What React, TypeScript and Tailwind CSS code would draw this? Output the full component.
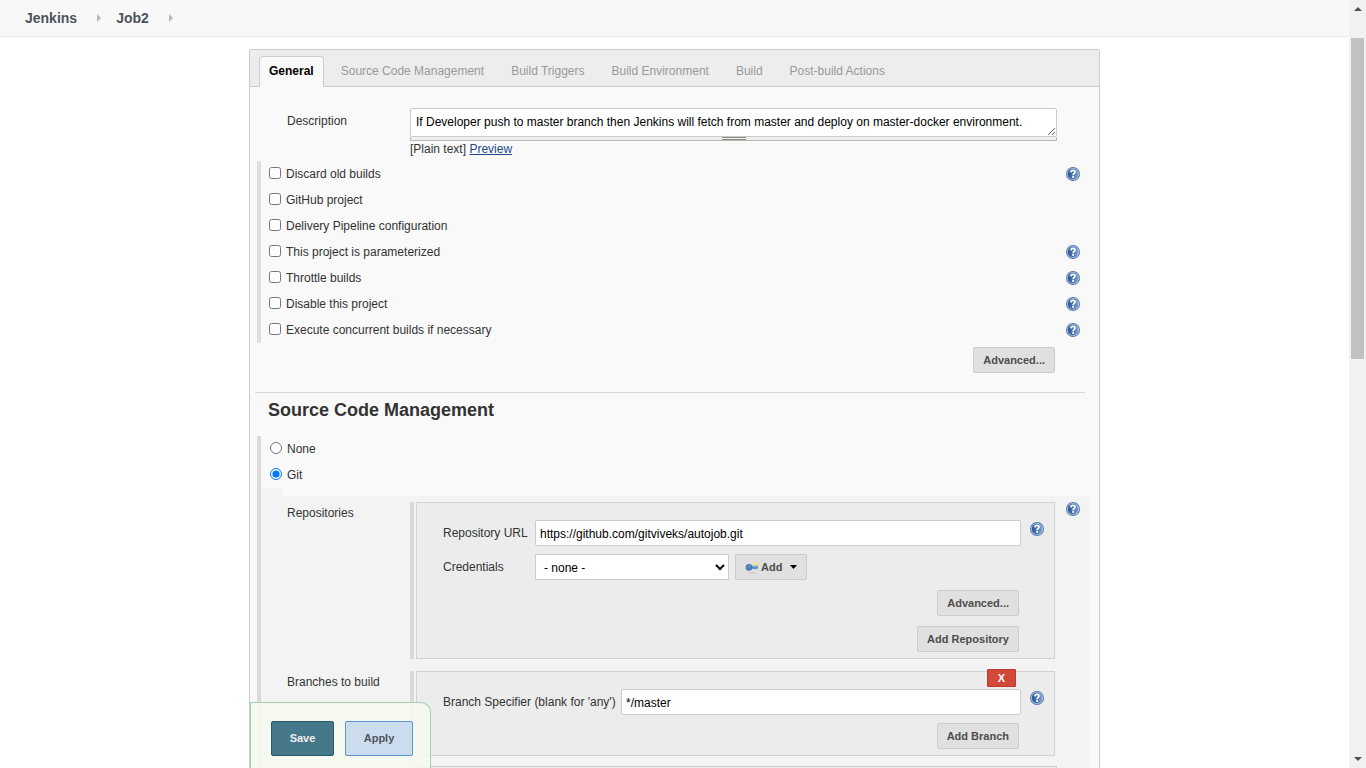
import type { ReactNode } from "react";

function HelpIcon() {
  return (
    <svg viewBox="0 0 14 14" className="block h-3.5 w-3.5" aria-hidden="true">
      <defs>
        <linearGradient id="help-fill" x1="0" y1="0" x2="1" y2="0">
          <stop offset="0" stopColor="#2c558f" />
          <stop offset="0.5" stopColor="#4a76b0" />
          <stop offset="1" stopColor="#7fa3cf" />
        </linearGradient>
      </defs>
      <circle cx="7" cy="7" r="7" fill="#5279ad" />
      <circle cx="7" cy="7" r="6.1" fill="#c3d3e6" />
      <circle cx="7" cy="7" r="5.4" fill="url(#help-fill)" />
      <path d="M4.9 5.4C5 3.9 5.9 3.4 7 3.4C8.3 3.4 9 4.2 9 5.1C9 6.4 7.1 6.5 7.1 8.2" fill="none" stroke="#fff" strokeWidth="1.7" />
      <rect x="6.2" y="9" width="1.8" height="1.8" fill="#fff" />
    </svg>
  );
}

function Help({ topic }: { topic: string }) {
  return (
    <button type="button" aria-label={"Help for " + topic} className="block h-3.5 w-3.5 shrink-0">
      <HelpIcon />
    </button>
  );
}

function KeyIcon() {
  return (
    <svg viewBox="0 0 16 14" className="h-3.5 w-4" aria-hidden="true">
      <ellipse cx="7.5" cy="12.8" rx="5" ry="0.6" fill="#cbcbcb" />
      <path d="M9 5.5L8.8 3L10.4 3.2L11.4 1.6L12.4 3.2L13.8 3L13 5.5L11.2 6.2Z" fill="#f1e873" />
      <path d="M6 5.8H13V8.8H11.7V9.3H9.7V8.9H6Z" fill="#5b8fc7" />
      <path d="M6.5 5.8H13V6.7H6.5Z" fill="#8fb4dc" />
      <circle cx="4" cy="7.4" r="3.3" fill="#4c7ab1" />
      <circle cx="3.9" cy="6.8" r="2" fill="#5c88bd" />
    </svg>
  );
}

function Btn({ children }: { children: ReactNode }) {
  return (
    <button
      type="button"
      className="flex h-[26px] items-center rounded-xs border border-[#ccc] bg-[#e0e0e0] px-[9px] text-[11px] font-bold text-[#4d4d4d]"
    >
      {children}
    </button>
  );
}

const tabs = ["General", "Source Code Management", "Build Triggers", "Build Environment", "Build", "Post-build Actions"];

const options = [
  { label: "Discard old builds", help: true },
  { label: "GitHub project", help: false },
  { label: "Delivery Pipeline configuration", help: false },
  { label: "This project is parameterized", help: true },
  { label: "Throttle builds", help: true },
  { label: "Disable this project", help: true },
  { label: "Execute concurrent builds if necessary", help: true },
];

const field = "h-[26px] rounded-xs border border-[#ccc] bg-white text-xs text-black";

function Crumb({ name }: { name: string }) {
  return (
    <li className="flex items-center">
      <a href="#" className="text-[#4d545d]">{name}</a>
      <svg viewBox="0 0 4 8" className="ml-5 h-2 w-1" aria-hidden="true">
        <path d="M0 0L4 4L0 8Z" fill="#b9b9b9" />
      </svg>
    </li>
  );
}

function Header() {
  return (
    <nav aria-label="Breadcrumb" className="border-b border-[#e3ebf0] bg-[#f8f8f8]">
      <ol className="flex h-9 items-center gap-[15px] pl-[25px] text-sm font-bold">
        <Crumb name="Jenkins" />
        <Crumb name="Job2" />
      </ol>
    </nav>
  );
}

function Tabs() {
  return (
    <div className="flex items-end gap-[7px] rounded-t-xs bg-[#ededed] pt-1.5 pl-[9px] shadow-[inset_0_-1px_0_#ccc]" role="tablist">
      {tabs.map((t, i) => (
        <button
          key={t}
          type="button"
          role="tab"
          aria-selected={i === 0}
          className={
            i === 0
              ? "h-[31px] rounded-t border border-b-0 border-[#ccc] bg-[#f9f9f9] px-[9px] pb-0.5 text-xs font-bold text-black"
              : "h-[31px] border border-b-0 border-transparent px-[9px] pb-0.5 text-xs text-[#999]"
          }
        >
          {t}
        </button>
      ))}
    </div>
  );
}

function General() {
  return (
    <section>
      <div className="flex pt-[21px] pr-[42px] pl-[37px]">
        <label htmlFor="description" className="w-[123px] pt-1 leading-[18px]">Description</label>
        <div className="min-w-0 flex-1">
          <textarea
            id="description"
            rows={1}
            className="block h-[29px] w-full overflow-hidden rounded-xs border border-[#ccc] bg-white px-[5px] py-1 text-xs leading-[18px] text-black"
            defaultValue="If Developer push to master branch then Jenkins will fetch from master and deploy on master-docker environment."
          />
          <div className="flex h-1 justify-center border-x border-b border-[#b8b8b0] bg-[#eee]">
            <span className="h-[3px] w-6 border-y border-[#8a9088]" />
          </div>
          <p className="leading-4">
            [Plain text] <a href="#" className="text-[#204a87] underline">Preview</a>
          </p>
        </div>
      </div>
      <div className="mt-1 ml-[7px] border-l-4 border-[#dedede] pr-[19px] pl-2">
        {options.map((o) => (
          <div key={o.label} className="flex h-[26px] items-center justify-between">
            <label className="flex items-center gap-[5px]">
              <input type="checkbox" className="mb-[3px] h-3 w-3" />
              {o.label}
            </label>
            {o.help && <Help topic={o.label} />}
          </div>
        ))}
      </div>
      <div className="flex justify-end pt-1 pr-11">
        <Btn>Advanced...</Btn>
      </div>
    </section>
  );
}

function Group({ label, children, help }: { label: string; children: ReactNode; help?: boolean }) {
  return (
    <div className="flex">
      <h3 className="w-[123px] shrink-0 pt-px leading-5">{label}</h3>
      <div className="flex min-w-0 flex-1 gap-0.5">
        <div className="w-1 shrink-0 bg-[#dadada]" />
        <div className="min-w-0 flex-1 border border-[#d2d2d2] bg-[#ececec] pl-[26px]">{children}</div>
      </div>
      <div className="w-[34px] shrink-0 pl-[11px]">{help && <Help topic={label} />}</div>
    </div>
  );
}

function SourceCode() {
  return (
    <section className="pb-16">
      <h2 className="mt-[19px] mr-3.5 ml-[5px] border-t border-[#d9d9d9] pt-1 pl-[13px] text-lg leading-[26px] font-bold">
        Source Code Management
      </h2>
      <div className="mt-[13px] mr-2.5 ml-[7px] border-l-4 border-[#dadada]">
        <div className="pl-[9px]">
          {["None", "Git"].map((name) => (
            <label key={name} className="flex h-[26px] items-center gap-[5px]">
              <input type="radio" name="scm" defaultChecked={name === "Git"} className="mb-[3px] h-3 w-3" />
              {name}
            </label>
          ))}
        </div>
        <div className="h-2 w-[21px] bg-[#f3f3f3]" />
        <div className="flex flex-col gap-3 bg-[#f3f3f3] pt-1.5 pl-[26px]">
          <Group label="Repositories" help>
            <div className="flex items-center pt-[17px] pr-2.5">
              <label htmlFor="url" className="w-[92px]">Repository URL</label>
              <input id="url" type="text" defaultValue="https://github.com/gitviveks/autojob.git" className={field + " min-w-0 flex-1 px-1 pt-0.5"} />
              <div className="ml-[9px] pb-2"><Help topic="Repository URL" /></div>
            </div>
            <div className="mt-2 flex items-center">
              <label htmlFor="credentials" className="w-[92px]">Credentials</label>
              <select id="credentials" className="mr-1.5 h-[26px] w-[194px] border border-[#ccc] bg-white px-1 pt-0.5 text-xs text-black">
                <option>- none -</option>
              </select>
              <Btn>
                <KeyIcon />
                <span>Add</span>
                <svg viewBox="0 0 7 4" className="ml-2 h-1 w-[7px]" aria-hidden="true">
                  <path d="M0 0H7L3.5 4Z" fill="#000" />
                </svg>
              </Btn>
            </div>
            <div className="flex flex-col items-end gap-2.5 pt-2.5 pr-[35px] pb-1.5">
              <Btn>Advanced...</Btn>
              <Btn>Add Repository</Btn>
            </div>
          </Group>
          <Group label="Branches to build">
            <div className="relative">
              <button
                type="button"
                aria-label="Delete branch"
                className="absolute -top-[3px] right-[38px] h-[18px] w-[29px] rounded-[1px] border border-[#c0392b] bg-[#d24939] text-[11px] leading-4 font-bold text-white"
              >
                X
              </button>
              <div className="flex items-center pt-[17px] pr-2.5">
                <label htmlFor="branch" className="w-[178px]">Branch Specifier (blank for 'any')</label>
                <input id="branch" type="text" defaultValue="*/master" className={field + " min-w-0 flex-1 px-1 pt-0.5"} />
                <div className="ml-[9px] pb-2"><Help topic="Branch Specifier" /></div>
              </div>
              <div className="flex justify-end pt-2 pr-[35px] pb-1.5">
                <Btn>Add Branch</Btn>
              </div>
            </div>
          </Group>
          <div className="-mt-0.5 mr-8 ml-[123px] h-12 border border-[#ccc] bg-[#ececec]" />
        </div>
      </div>
    </section>
  );
}

function Actions() {
  return (
    <div className="pointer-events-none absolute inset-x-0 bottom-0 mx-auto max-w-[851px] pl-px">
      <div className="pointer-events-auto flex w-fit gap-[11px] rounded-tr-[10px] border border-b-0 border-[#a4cdb4] bg-[#f5f9ef]/90 pt-[18px] pr-[17px] pb-3 pl-5 text-[11px] font-bold">
        <button type="submit" className="h-[35px] w-[63px] rounded-xs border border-[#2b5767] bg-[#45788a] text-[#eee]">Save</button>
        <button type="button" className="h-[35px] w-[68px] rounded-xs border border-[#5c94cf] bg-[#cbdcee] text-[#4d545d]">Apply</button>
      </div>
    </div>
  );
}

function ScrollTrack() {
  return (
    <div className="flex w-[17px] shrink-0 flex-col bg-[#f1f1f1] px-0.5" aria-hidden="true">
      <svg viewBox="0 0 8 4" className="mx-auto mt-[7px] h-1 w-2"><path d="M0 4L4 0L8 4Z" fill="#505050" /></svg>
      <div className="mt-[27px] h-[321px] bg-[#c1c1c1]" />
      <svg viewBox="0 0 8 4" className="mx-auto mt-auto mb-[7px] h-1 w-2"><path d="M0 0L4 4L8 0Z" fill="#505050" /></svg>
    </div>
  );
}

export default function App() {
  return (
    <div className="flex h-screen overflow-hidden bg-white font-['Liberation_Sans',Arial,sans-serif] text-xs text-[#333]">
      <div className="relative min-w-0 flex-1 overflow-hidden">
        <Header />
        <main className="mx-auto mt-3 max-w-[851px] rounded-t-xs border border-[#ccc] bg-[#f9f9f9]">
          <Tabs />
          <General />
          <SourceCode />
        </main>
        <Actions />
      </div>
      <ScrollTrack />
    </div>
  );
}
